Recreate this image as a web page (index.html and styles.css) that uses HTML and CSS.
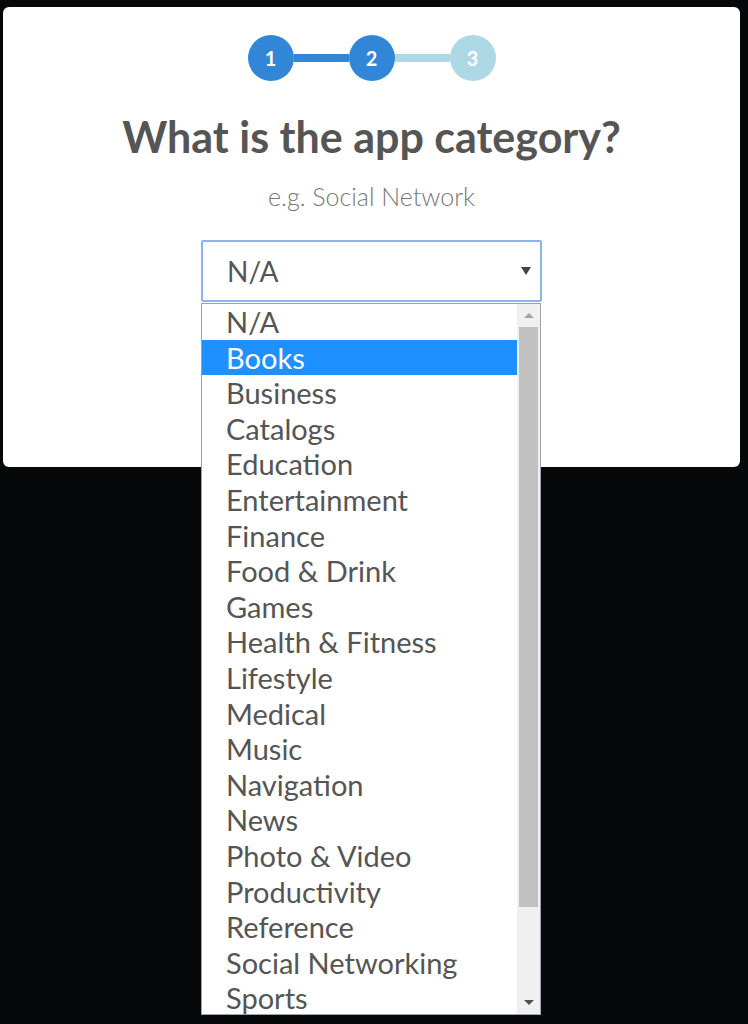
FILE: index.html
```html
<!DOCTYPE html>
<html lang="en">
<head>
    <meta charset="UTF-8">
    <meta name="viewport" content="width=device-width, initial-scale=1.0">
    <title>App Category</title>
    <link rel="stylesheet" href="styles.css">
</head>
<body>

<div class="card">
    <div class="stepper">
        <span class="step done">1</span>
        <span class="bar done"></span>
        <span class="step done">2</span>
        <span class="bar"></span>
        <span class="step">3</span>
    </div>

    <h1>What is the app category?</h1>
    <p class="hint">e.g. Social Network</p>

    <div class="select-wrap">
        <div class="select">
            <span>N/A</span>
            <span class="arrow"></span>
        </div>

        <div class="options">
            <ul class="option-list">
                <li>N/A</li>
                <li class="active">Books</li>
                <li>Business</li>
                <li>Catalogs</li>
                <li>Education</li>
                <li>Entertainment</li>
                <li>Finance</li>
                <li>Food &amp; Drink</li>
                <li>Games</li>
                <li>Health &amp; Fitness</li>
                <li>Lifestyle</li>
                <li>Medical</li>
                <li>Music</li>
                <li>Navigation</li>
                <li>News</li>
                <li>Photo &amp; Video</li>
                <li>Productivity</li>
                <li>Reference</li>
                <li>Social Networking</li>
                <li>Sports</li>
            </ul>
            <div class="scrollbar">
                <span class="scroll-btn up"></span>
                <div class="track">
                    <div class="thumb"></div>
                </div>
                <span class="scroll-btn down"></span>
            </div>
        </div>
    </div>
</div>

</body>
</html>
```

FILE: styles.css
```css
/* Global styles */
* {
    margin: 0;
    padding: 0;
    box-sizing: border-box;
}

body {
    background: #07080a;
    font-family: 'Lato', 'Open Sans', sans-serif;
    height: 1024px;
    overflow: hidden;
}

.card {
    margin: 7px 8px 0 3px;
    height: 460px;
    padding-top: 28px;
    background: #fff;
    border-radius: 6px;
    display: flex;
    flex-direction: column;
    align-items: center;
}

/* Progress steps */
.stepper {
    display: flex;
    align-items: center;
}

.step {
    width: 46px;
    height: 46px;
    border-radius: 50%;
    background: #add8e6;
    color: #fff;
    font-size: 20px;
    font-weight: bold;
    display: flex;
    justify-content: center;
    align-items: center;
}

.step.done {
    background: #3186d8;
}

.bar {
    width: 55px;
    height: 8px;
    background: #add8e6;
}

.bar.done {
    background: #3186d8;
}

h1 {
    margin-top: 30px;
    font-size: 43px;
    line-height: 52px;
    font-weight: bold;
    color: #555;
}

.hint {
    margin-top: 18px;
    font-size: 25px;
    line-height: 30px;
    font-weight: 300;
    color: #777;
}

/* Select box with its open list */
.select-wrap {
    position: relative;
    margin-top: 29px;
    width: 341px;
}

.select {
    height: 62px;
    border: 2px solid #8db3f0;
    border-radius: 2px;
    padding: 0 9px 0 24px;
    display: flex;
    justify-content: space-between;
    align-items: center;
    font-size: 28px;
    color: #555;
}

.arrow {
    width: 0;
    height: 0;
    border-left: 5px solid transparent;
    border-right: 5px solid transparent;
    border-top: 8px solid #444;
}

.options {
    position: absolute;
    top: 63px;
    left: 0;
    width: 340px;
    height: 712px;
    background: #fff;
    border: 1px solid #9aa3b4;
    display: flex;
    overflow: hidden;
}

.option-list {
    flex: 1;
    list-style: none;
}

.option-list li {
    height: 35.6px;
    line-height: 35.6px;
    padding-left: 24px;
    font-size: 29px;
    color: #555;
    white-space: nowrap;
}

.option-list li.active {
    background: #1e90ff;
    color: #fff;
}

.scrollbar {
    width: 23px;
    background: #f0f0f0;
    display: flex;
    flex-direction: column;
    align-items: center;
}

.scroll-btn {
    height: 23px;
    display: flex;
    justify-content: center;
    align-items: center;
}

.scroll-btn::after {
    content: "";
    border-left: 5px solid transparent;
    border-right: 5px solid transparent;
}

.scroll-btn.up::after {
    border-bottom: 5px solid #a3a3a3;
}

.scroll-btn.down::after {
    border-top: 5px solid #505050;
}

.track {
    flex: 1;
    width: 100%;
    padding: 0 2px;
}

.thumb {
    height: 580px;
    background: #c1c1c1;
}
```
